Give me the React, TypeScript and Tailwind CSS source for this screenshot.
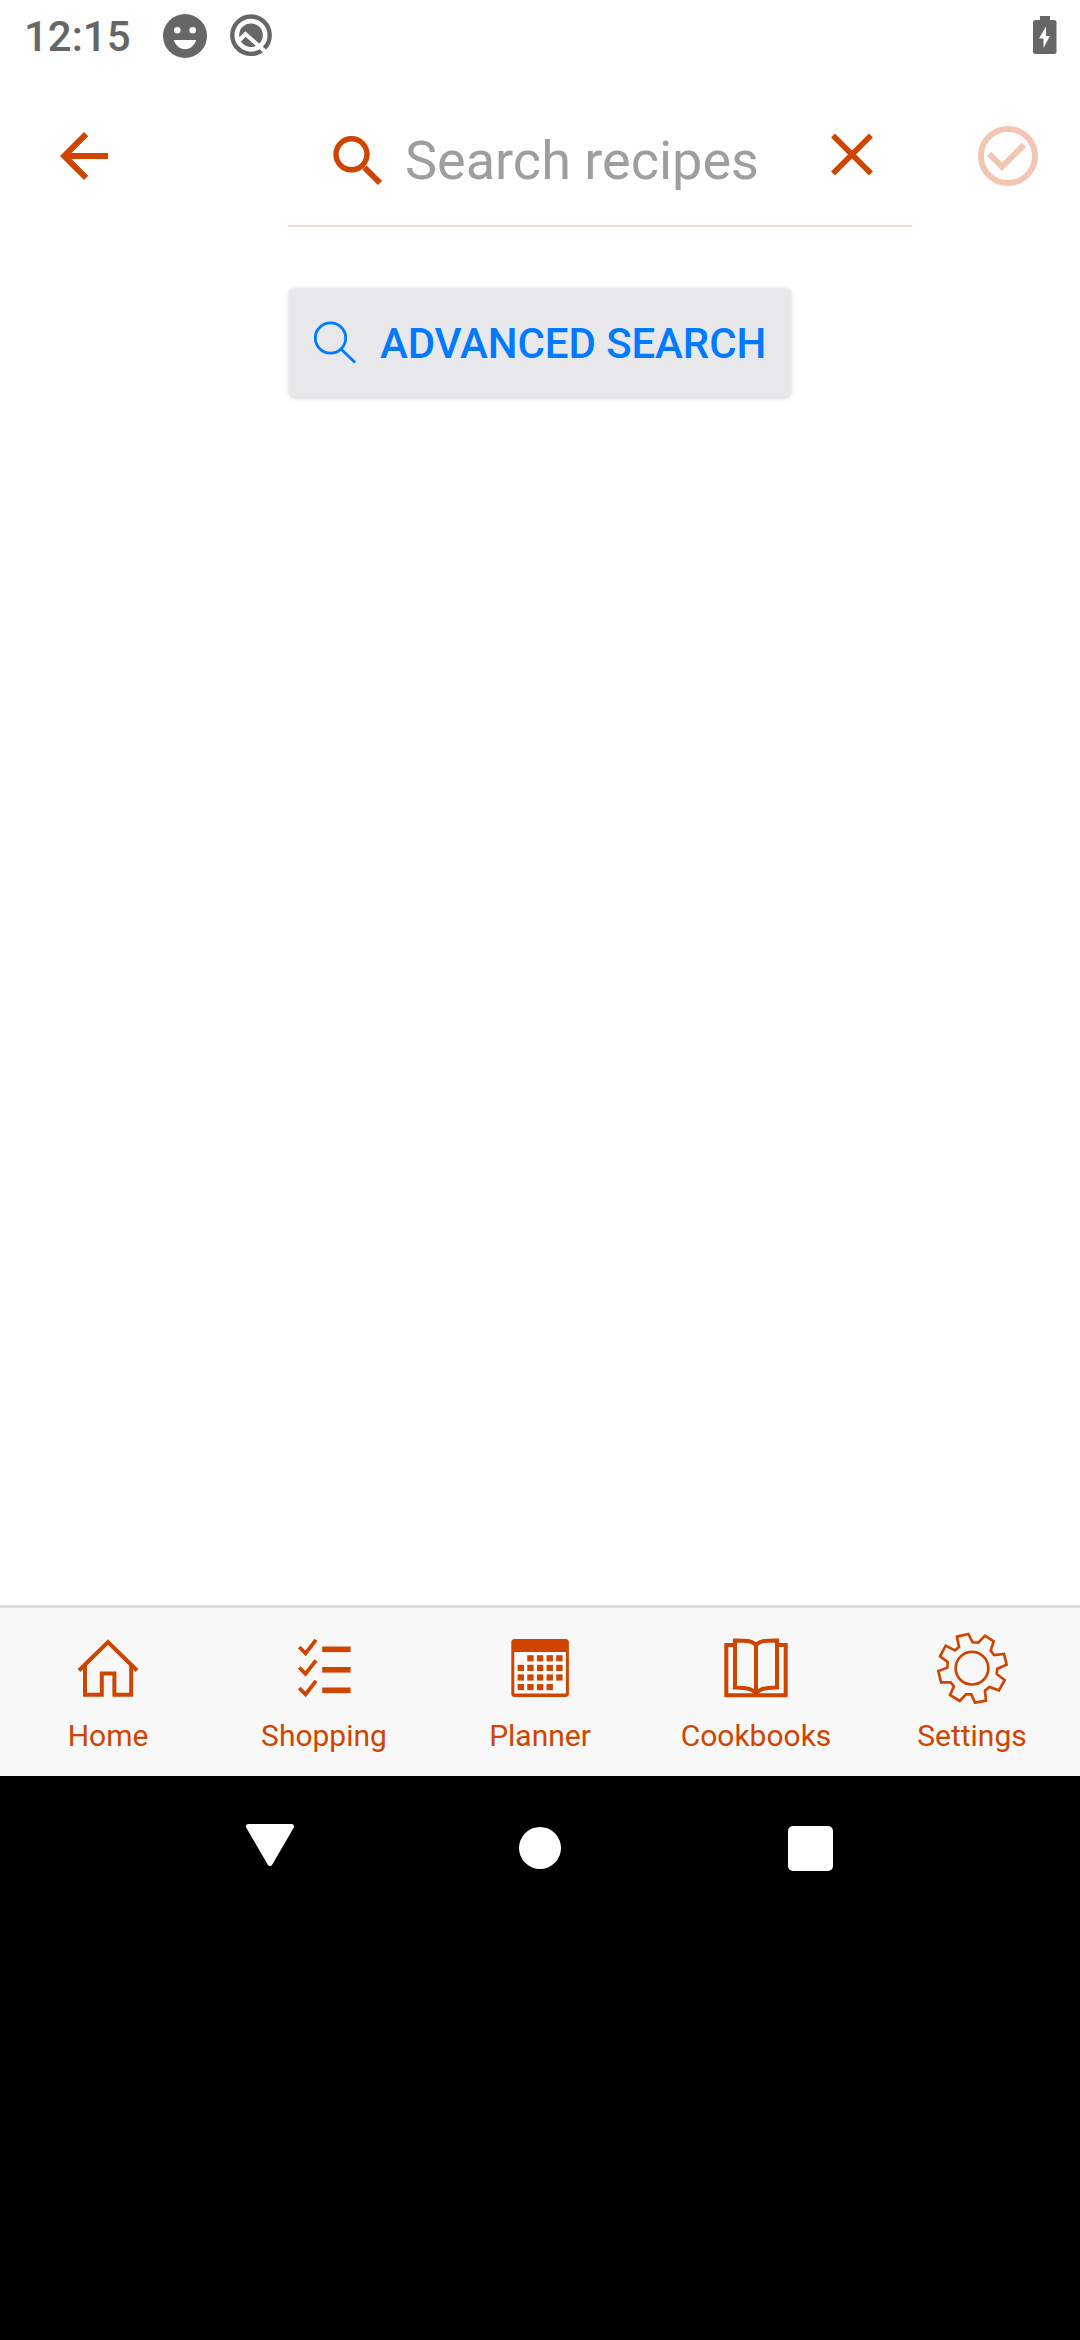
import React from "react";

const ACCENT = "#cf4500";

function StatusBar() {
  return (
    <header className="flex h-18 items-center pl-6 pr-[23px] text-[#666666]">
      <span className="mt-0.5 w-[108px] text-[42px] leading-[50px] font-medium">12:15</span>
      <svg className="ml-[31px]" width="44" height="44" viewBox="0 0 44 44">
        <circle cx="22" cy="22" r="22" fill="#666" />
        <circle cx="14.3" cy="16.3" r="3.3" fill="#fff" />
        <circle cx="29.7" cy="16.3" r="3.3" fill="#fff" />
        <path d="M10.8 26h22.4c-1.800 5.500-6 9.200-11.200 9.200s-9.400-3.700-11.200-9.200z" fill="#fff" />
      </svg>
      <svg className="ml-[22px]" width="44" height="44" viewBox="0 0 44 44">
        <circle cx="22" cy="21.200" r="18.700" fill="none" stroke="#666" strokeWidth="4.400" />
        <circle cx="22" cy="21.200" r="11.800" fill="#666" />
        <path d="M10.500 26L16.500 20L39 40" fill="none" stroke="#fff" strokeWidth="4" />
      </svg>
      <svg className="ml-auto" width="24" height="40" viewBox="0 0 24 40">
        <path d="M7 0h10v4h4q2.500 0 2.500 2.500v29q0 2.500-2.500 2.500h-18.500q-2.500 0-2.500-2.500v-29q0-2.500 2.500-2.500h4.500z" fill="#666" />
        <path d="M13 10.500v9.500h4l-6.500 12v-9.500h-4.500z" fill="#fff" />
      </svg>
    </header>
  );
}

function SearchHeader() {
  return (
    <div className="flex h-[155px] pl-12 pr-9">
      <svg className="mt-12" width="72" height="72" viewBox="0 0 24 24" fill={ACCENT}>
        <path d="M20 11H7.830l5.590-5.590L12 4l-8 8 8 8 1.410-1.410L7.830 13H20v-2z" />
      </svg>
      <div className="ml-[168px] flex w-[624px] border-b-2 border-[#f5d5cb]">
        <svg className="mt-[60px] ml-[42px]" width="56" height="56" viewBox="0 0 56 56" fill="none" stroke={ACCENT}>
          <circle cx="21.500" cy="22.300" r="15.500" strokeWidth="5.400" />
          <path d="M34.500 35.500L50 51" strokeWidth="6" />
        </svg>
        <span className="mt-[57px] ml-[19px] w-[398px] text-[54px] leading-[64px] whitespace-nowrap text-[#9e9e9e]">
          Search recipes
        </span>
        <svg className="mt-[58px] ml-[25px] shrink-0" width="48" height="48" viewBox="0 0 48 48" fill="none" stroke={ACCENT} strokeWidth="5.600">
          <path d="M5 5.500L43 43.500M43 5.500L5 43.500" />
        </svg>
      </div>
      <svg className="mt-12 ml-auto" width="72" height="72" viewBox="0 0 24 24" fill="#f1c7b4">
        <path d="M16.590 7.580L10 14.170l-3.590-3.580L5 12l5 5 8-8zM12 2C6.480 2 2 6.480 2 12s4.480 10 10 10 10-4.480 10-10S17.520 2 12 2zm0 18c-4.420 0-8-3.580-8-8s3.580-8 8-8 8 3.580 8 8-3.580 8-8 8z" />
      </svg>
    </div>
  );
}

function HomeIcon() {
  return (
    <svg width="72" height="72" viewBox="72 1632 72 72" fill="none" stroke={ACCENT} strokeWidth="4">
      <path d="M79 1670.500L108 1642l29 28.500" />
      <path d="M85 1665v29.700h16.800v-21.200h12.600v21.200h16.800v-29.700" />
    </svg>
  );
}

function ShoppingIcon() {
  return (
    <svg width="72" height="72" viewBox="288 1632 72 72" fill="none" stroke={ACCENT}>
      {[0, 20.5, 41].map((dy) => (
        <g key={dy} transform={`translate(0 ${dy})`}>
          <path d="M299.200 1647l6.300 6.300 10.500-13.500" strokeWidth="3.800" />
          <path d="M322.200 1649.300h28.400" strokeWidth="5.600" />
        </g>
      ))}
    </svg>
  );
}

function PlannerIcon() {
  const rows = [[1, 2, 3, 4], [0, 1, 2, 3, 4], [0, 1, 2, 3, 4], [0, 1, 2, 3]];
  return (
    <svg width="72" height="72" viewBox="504 1632 72 72" fill={ACCENT}>
      <rect x="511.300" y="1639" width="57.600" height="58" rx="3.500" />
      <rect x="514.300" y="1652" width="51.600" height="41.500" fill="#fff" />
      {rows.map((cols, r) =>
        cols.map((c) => (
          <rect key={`${r}-${c}`} x={517.6 + c * 9.65} y={1655.2 + r * 9.6} width="6.400" height="6.200" />
        ))
      )}
    </svg>
  );
}

function CookbooksIcon() {
  return (
    <svg width="72" height="72" viewBox="720 1632 72 72" fill="none" stroke={ACCENT} strokeWidth="4">
      <path d="M735 1645h-8.700v50.300h59.400V1645H777" />
      <path d="M756 1693.500c-3-3.500-6-6-21-6V1640.500c11 0 17 0 21 4.500c4-4.500 10-4.500 21-4.500v47c-15 0-18 2.500-21 6z" />
      <path d="M756 1644v51" />
    </svg>
  );
}

function SettingsIcon() {
  return (
    <svg width="72" height="72" viewBox="828 124 216 216" fill="none" stroke={ACCENT} strokeWidth="8">
      <path d="M891 138L925 130L938 155L955 156L975 135L1001 152L992 180L1002 193L1032 190L1040 222L1012 234L1010 250L1034 268L1017 299L988 289L975 300L978 330L945 336L934 311L918 311L899 331L870 313L882 287L872 275L843 275L835 241L862 231L863 214L840 197L857 165L885 179L897 169Z" />
      <circle cx="936" cy="232.500" r="49" />
    </svg>
  );
}

const tabs = [
  { label: "Home", Icon: HomeIcon },
  { label: "Shopping", Icon: ShoppingIcon },
  { label: "Planner", Icon: PlannerIcon },
  { label: "Cookbooks", Icon: CookbooksIcon },
  { label: "Settings", Icon: SettingsIcon },
];

function TabBar() {
  return (
    <nav className="grid h-[171px] grid-cols-5 border-t-3 border-[#e0e0e0] bg-[#f8f8f8]">
      {tabs.map(({ label, Icon }) => (
        <div key={label} className="flex flex-col items-center pt-6 text-[#cf4500]">
          <Icon />
          <span className="mt-[14px] text-[30px] leading-[36px]">{label}</span>
        </div>
      ))}
    </nav>
  );
}

function SystemNav() {
  return (
    <div className="flex h-36 items-center justify-between px-[234px]">
      <svg width="72" height="72" viewBox="0 0 72 72" fill="#fff" stroke="#fff" strokeWidth="5" strokeLinejoin="round">
        <path d="M14.500 14.500h43L36 51.500z" />
      </svg>
      <div className="size-[42px] rounded-full bg-white" />
      <div className="flex w-18 justify-center">
        <div className="size-[45px] rounded-[5px] bg-white" />
      </div>
    </div>
  );
}

export default function App() {
  return (
    <div className="flex h-[2340px] w-[1080px] flex-col overflow-hidden bg-black font-['Roboto',sans-serif]">
      <div className="flex h-[1776px] flex-col bg-[#fefefe]">
        <StatusBar />
        <SearchHeader />
        <main className="grow pt-[61px] pl-[289px]">
          <button className="flex h-[109px] w-[502px] items-center rounded-[6px] bg-[#e8e8ea] pl-[23px] shadow-[0_1px_4px_rgba(0,0,0,0.18)]">
            <svg className="mt-px" width="46" height="46" viewBox="0 0 46 46" fill="none" stroke="#007aff" strokeWidth="2.800">
              <circle cx="18.500" cy="18" r="15.200" />
              <path d="M29.500 29.500L43 42.500" />
            </svg>
            <span className="mt-0.5 ml-[22px] text-[42px] leading-[50px] font-medium tracking-[-0.1px] whitespace-nowrap text-[#007aff]">ADVANCED SEARCH</span>
          </button>
        </main>
        <TabBar />
      </div>
      <SystemNav />
    </div>
  );
}
